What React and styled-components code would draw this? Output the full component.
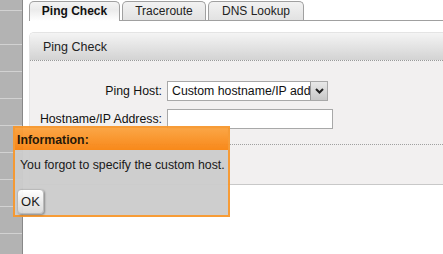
import React from 'react'
import styled, { createGlobalStyle } from 'styled-components'

const GlobalStyle = createGlobalStyle`
    html, body {
        margin: 0;
        padding: 0;
        background: #ffffff;
        font-family: "Liberation Sans", Arial, sans-serif;
        font-size: 12px;
        color: #111;
    }
`

const sideRows = [10, 33, 26, 26, 26, 26, 26, 26, 26, 26]

function App() {
    return (
        <Page>
            <GlobalStyle />
            <Sidebar>
                {sideRows.map((h, i) => (
                    <SideRow key={i} $h={h} />
                ))}
            </Sidebar>
            <Main>
                <Tabs>
                    <Tab $active $w={91}>Ping Check</Tab>
                    <Tab $w={84}>Traceroute</Tab>
                    <Tab $w={96}>DNS Lookup</Tab>
                </Tabs>
                <Panel>
                    <PanelHeader>Ping Check</PanelHeader>
                    <PanelBody>
                        <FormRow>
                            <Label>Ping Host:</Label>
                            <FakeSelect>
                                <SelectText>Custom hostname/IP address</SelectText>
                                <SelectArrow>
                                    <svg width="9" height="6" viewBox="0 0 9 6">
                                        <path d="M1 1 L4.5 4.5 L8 1" fill="none" stroke="#222" strokeWidth="2" />
                                    </svg>
                                </SelectArrow>
                            </FakeSelect>
                        </FormRow>
                        <FormRow>
                            <Label>Hostname/IP Address:</Label>
                            <TextInput />
                        </FormRow>
                        <Footer />
                    </PanelBody>
                </Panel>
            </Main>
            <Dialog>
                <DialogHeader>Information:</DialogHeader>
                <DialogBody>
                    <Message>You forgot to specify the custom host.</Message>
                    <OkButton>OK</OkButton>
                </DialogBody>
            </Dialog>
        </Page>
    )
}

export default App

const Page = styled.div`
    position: relative;
    display: flex;
    width: 100vw;
    height: 100vh;
    overflow: hidden;
`

const Sidebar = styled.div`
    width: 22px;
    flex: none;
    background: #b3b3b3;
    border-right: 1px solid #888888;
    display: flex;
    flex-direction: column;
`

const SideRow = styled.div`
    height: ${p => p.$h}px;
    flex: none;
    border-bottom: 1px solid #d2d2d2;
`

const Main = styled.div`
    flex: 1;
    padding-left: 6px;
    display: flex;
    flex-direction: column;
`

const Tabs = styled.div`
    display: flex;
    align-items: flex-end;
    gap: 2px;
    margin-top: 1px;
    height: 19px;
    border-bottom: 1px solid #a0a0a0;
`

const Tab = styled.div`
    box-sizing: border-box;
    width: ${p => p.$w}px;
    height: ${p => (p.$active ? 20 : 19)}px;
    margin-bottom: ${p => (p.$active ? -1 : 0)}px;
    border: 1px solid #a0a0a0;
    border-bottom: none;
    border-radius: 5px 5px 0 0;
    display: flex;
    align-items: center;
    justify-content: center;
    padding-bottom: ${p => (p.$active ? 2 : 1)}px;
    font-size: 12px;
    font-weight: ${p => (p.$active ? 'bold' : 'normal')};
    color: ${p => (p.$active ? '#111' : '#222')};
    background: ${p => (p.$active
        ? 'linear-gradient(#f4f4f4, #ebebeb 40%, #ffffff)'
        : 'linear-gradient(#f2f2f2, #e2e2e2)')};
`

const Panel = styled.div`
    margin-top: 11px;
    border-top: 1px solid #e4e4e4;
    border-left: 1px solid #e4e4e4;
    border-bottom: 1px solid #c8c8c8;
    border-top-left-radius: 5px;
    overflow: hidden;
`

const PanelHeader = styled.div`
    height: 28px;
    display: flex;
    align-items: center;
    padding-left: 13px;
    padding-top: 1px;
    box-sizing: border-box;
    font-size: 12.5px;
    color: #222;
    background: linear-gradient(#f4f4f4, #d3d3d3);
    border-bottom: 1px dotted #999999;
`

const PanelBody = styled.div`
    background: #f2f0f0;
    padding-top: 20px;
    display: flex;
    flex-direction: column;
    gap: 8px;
`

const FormRow = styled.div`
    display: flex;
    align-items: center;
    gap: 5px;
`

const Label = styled.div`
    width: 132px;
    text-align: right;
    font-size: 12.3px;
    color: #111;
`

const FakeSelect = styled.div`
    box-sizing: border-box;
    width: 161px;
    height: 20px;
    border: 1px solid #a8a8a8;
    background: #ffffff;
    display: flex;
    align-items: center;
    overflow: hidden;
`

const SelectText = styled.div`
    flex: 1;
    padding-left: 4px;
    white-space: nowrap;
    overflow: hidden;
    font-size: 12.3px;
`

const SelectArrow = styled.div`
    box-sizing: border-box;
    width: 17px;
    height: 18px;
    flex: none;
    border-left: 1px solid #999;
    background: linear-gradient(#e8e8e8, #c8c8c8);
    display: flex;
    align-items: center;
    justify-content: center;
`

const TextInput = styled.input`
    box-sizing: border-box;
    width: 166px;
    height: 20px;
    border: 1px solid #a8a8a8;
    background: #ffffff;
    margin: 0;
    padding: 0 3px;
    outline: none;
`

const Footer = styled.div`
    margin-top: 7px;
    height: 39px;
    border-top: 1px dotted #a0a0a0;
`

const Dialog = styled.div`
    position: absolute;
    left: 13px;
    top: 126px;
    width: 217px;
    height: 91px;
    box-sizing: border-box;
    border: 2px solid #f7982f;
    display: flex;
    flex-direction: column;
    opacity: 0.96;
`

const DialogHeader = styled.div`
    height: 22px;
    flex: none;
    display: flex;
    align-items: center;
    padding-left: 2px;
    padding-top: 1px;
    box-sizing: border-box;
    font-weight: bold;
    font-size: 12.3px;
    color: #1a1000;
    background: linear-gradient(#fca33f, #f98512);
`

const DialogBody = styled.div`
    flex: 1;
    background: #cdcdcd;
    display: flex;
    flex-direction: column;
    align-items: flex-start;
    padding: 8px 0 0 2px;
`

const Message = styled.div`
    padding-left: 3px;
    font-size: 12.3px;
    color: #111;
    white-space: nowrap;
`

const OkButton = styled.button`
    margin-top: 17px;
    width: 27px;
    height: 25px;
    padding: 0;
    border: 1px solid #b8b8b8;
    border-radius: 4px;
    background: linear-gradient(#ffffff, #d8d8d8);
    box-shadow: 1px 1px 2px rgba(0, 0, 0, 0.35);
    font-family: "Liberation Sans", Arial, sans-serif;
    font-size: 13px;
    color: #111;
`
